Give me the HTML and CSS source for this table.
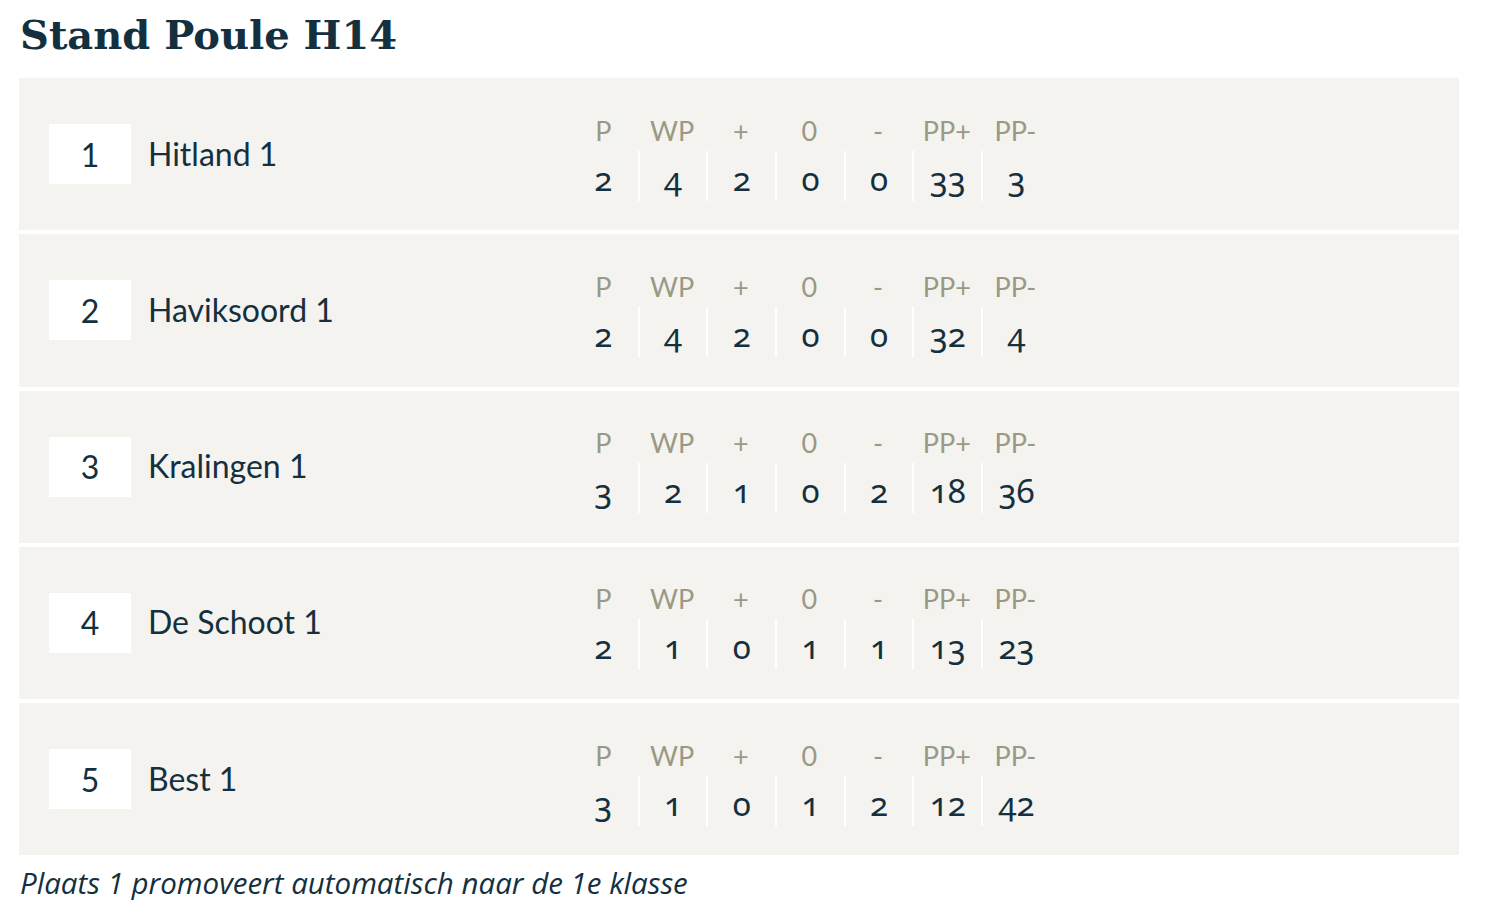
FILE: index.html
```html
<!DOCTYPE html>
<html lang="nl">
<head>
  <meta charset="UTF-8">
  <title>Stand Poule H14</title>
  <link rel="stylesheet" href="styles.css">
</head>
<body>
  <h1 class="title">Stand Poule H14</h1>

  <div class="standings">
    <div class="team-row">
      <div class="rank">1</div>
      <div class="team">Hitland 1</div>
      <div class="stats">
        <div class="stat"><span class="head">P</span><span class="val">2</span></div>
        <div class="stat"><span class="head">WP</span><span class="val">4</span></div>
        <div class="stat"><span class="head">+</span><span class="val">2</span></div>
        <div class="stat"><span class="head">0</span><span class="val">0</span></div>
        <div class="stat"><span class="head">-</span><span class="val">0</span></div>
        <div class="stat"><span class="head">PP+</span><span class="val">33</span></div>
        <div class="stat"><span class="head">PP-</span><span class="val">3</span></div>
      </div>
    </div>

    <div class="team-row">
      <div class="rank">2</div>
      <div class="team">Haviksoord 1</div>
      <div class="stats">
        <div class="stat"><span class="head">P</span><span class="val">2</span></div>
        <div class="stat"><span class="head">WP</span><span class="val">4</span></div>
        <div class="stat"><span class="head">+</span><span class="val">2</span></div>
        <div class="stat"><span class="head">0</span><span class="val">0</span></div>
        <div class="stat"><span class="head">-</span><span class="val">0</span></div>
        <div class="stat"><span class="head">PP+</span><span class="val">32</span></div>
        <div class="stat"><span class="head">PP-</span><span class="val">4</span></div>
      </div>
    </div>

    <div class="team-row">
      <div class="rank">3</div>
      <div class="team">Kralingen 1</div>
      <div class="stats">
        <div class="stat"><span class="head">P</span><span class="val">3</span></div>
        <div class="stat"><span class="head">WP</span><span class="val">2</span></div>
        <div class="stat"><span class="head">+</span><span class="val">1</span></div>
        <div class="stat"><span class="head">0</span><span class="val">0</span></div>
        <div class="stat"><span class="head">-</span><span class="val">2</span></div>
        <div class="stat"><span class="head">PP+</span><span class="val">18</span></div>
        <div class="stat"><span class="head">PP-</span><span class="val">36</span></div>
      </div>
    </div>

    <div class="team-row">
      <div class="rank">4</div>
      <div class="team">De Schoot 1</div>
      <div class="stats">
        <div class="stat"><span class="head">P</span><span class="val">2</span></div>
        <div class="stat"><span class="head">WP</span><span class="val">1</span></div>
        <div class="stat"><span class="head">+</span><span class="val">0</span></div>
        <div class="stat"><span class="head">0</span><span class="val">1</span></div>
        <div class="stat"><span class="head">-</span><span class="val">1</span></div>
        <div class="stat"><span class="head">PP+</span><span class="val">13</span></div>
        <div class="stat"><span class="head">PP-</span><span class="val">23</span></div>
      </div>
    </div>

    <div class="team-row">
      <div class="rank">5</div>
      <div class="team">Best 1</div>
      <div class="stats">
        <div class="stat"><span class="head">P</span><span class="val">3</span></div>
        <div class="stat"><span class="head">WP</span><span class="val">1</span></div>
        <div class="stat"><span class="head">+</span><span class="val">0</span></div>
        <div class="stat"><span class="head">0</span><span class="val">1</span></div>
        <div class="stat"><span class="head">-</span><span class="val">2</span></div>
        <div class="stat"><span class="head">PP+</span><span class="val">12</span></div>
        <div class="stat"><span class="head">PP-</span><span class="val">42</span></div>
      </div>
    </div>
  </div>

  <p class="footnote">Plaats 1 promoveert automatisch naar de 1e klasse</p>
</body>
</html>
```

FILE: styles.css
```css
body { margin: 0; padding: 0 27px 0 19px; font-family: Lato, "Noto Sans", sans-serif; color: #14303f; background: #fff; }
.title { margin: 0; padding: 5px 0 0 1px; height: 78px; box-sizing: border-box; font-family: "DejaVu Serif", serif; font-size: 40px; font-weight: bold; line-height: 60px; }
.standings { width: 1440px; }
.team-row { display: flex; align-items: center; height: 152.25px; margin-bottom: 4px; padding: 0 30px; background: #f4f3ef; }
.rank { flex: 0 0 82px; height: 60px; display: flex; align-items: center; justify-content: center; background: #fff; font-size: 32px; }
.team { flex: 0 0 421px; margin-left: 17px; font-size: 32px; padding-bottom: 2px; }
.stats { display: flex; padding-top: 3px; }
.stat { width: 68.7px; display: flex; flex-direction: column; align-items: center; }
.head { height: 40px; line-height: 40px; font-size: 27px; color: #999985; }
.val { width: 100%; height: 50px; line-height: 56px; text-align: center; font-family: "Noto Sans", sans-serif; font-size: 33px; font-variant-numeric: oldstyle-nums; }
.stat + .stat .val { border-left: 2px solid #fff; box-sizing: border-box; }
.footnote { margin: 11px 0 0 1px; font-family: "Open Sans", sans-serif; font-size: 29.5px; line-height: 34px; font-style: italic; }
```
